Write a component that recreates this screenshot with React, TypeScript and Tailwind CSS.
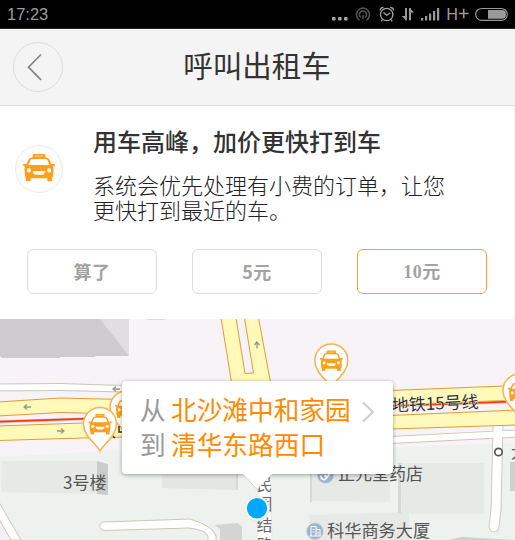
import React from 'react';

const CJK = "font-['Noto_Sans_CJK_SC',sans-serif]";

function TaxiShape() {
  return (
    <g>
      <path
        fill="#ff9f1c"
        d="M10.600 0H21.400Q22.200 0 22.300.8L22.600 3.800H24Q25.600 3.800 26.300 5.300L28.600 10.300L30.800 9.700Q32 9.700 32 11Q31.900 12.300 30 12.500Q30.500 13.800 30.500 15.500L30 22.500Q29.900 23.500 29.200 23.800V26.300Q29.200 27.300 28.200 27.300H25.300Q24.300 27.300 24.300 26.300V24.200H7.700V26.300Q7.700 27.300 6.700 27.300H3.800Q2.800 27.300 2.800 26.300V23.800Q2.100 23.500 2 22.500L1.500 15.500Q1.500 13.800 2 12.500Q.1 12.300 0 11Q0 9.700 1.200 9.700L3.400 10.300L5.700 5.300Q6.400 3.800 8 3.800H9.400L9.700.8Q9.800 0 10.600 0Z"
      />
      <path fill="#fff" d="M9.600 5.100H22.400Q24 5.100 24.600 6.500L26.500 11.100H5.500L7.400 6.500Q8 5.100 9.600 5.100Z" />
      <circle cx="5.900" cy="16.400" r="2.100" fill="#fff" />
      <circle cx="26.100" cy="16.400" r="2.100" fill="#fff" />
      <path fill="#fff" d="M10.200 17H21.800Q22.400 17 22.200 17.800Q21.600 20.800 18.800 20.800H13.200Q10.400 20.800 9.800 17.800Q9.600 17 10.200 17Z" />
      <path d="M12.200 2.100H20" stroke="#ffe3b5" strokeWidth="1.200" strokeDasharray="1.500 .5" />
    </g>
  );
}

function TaxiPin({ x, y }: { x: number; y: number }) {
  return (
    <g transform={`translate(${x} ${y})`}>
      <path d="M0 43.500C-3 37-16.500 29-16.500 16.500A16.500 16.500 0 0 1 16.500 16.500C16.500 29 3 37 0 43.500Z" fill="#fff" stroke="#fbb14b" strokeWidth="1.500" />
      <g transform="translate(-11.500 6.500) scale(.72 .75)">
        <TaxiShape />
      </g>
    </g>
  );
}

function StatusBar() {
  return (
    <div className="flex h-[29px] shrink-0 items-center justify-between border-b border-[#262226] bg-black pl-[7px] pr-[6px]">
      <span className="font-['Liberation_Sans',sans-serif] text-[16.500px] leading-none text-[#9c9c9c]">17:23</span>
      <svg className="h-[28px] w-[180px]" viewBox="329 0 180 28" fill="none" stroke="#999">
        <g fill="#a5a5a5" stroke="none">
          <rect x="332" y="17" width="3.600" height="3.600" rx="1" />
          <rect x="338" y="17" width="3.600" height="3.600" rx="1" />
          <rect x="344" y="17" width="3.600" height="3.600" rx="1" />
        </g>
        <g stroke="#555" strokeWidth="1.500">
          <path d="M359.500 20.300a6.600 6.600 0 1 1 7 0" />
          <path d="M361 17.500a3.600 3.600 0 1 1 4 0" />
          <path d="M363 15v4" />
        </g>
        <g stroke="#a5a5a5" strokeWidth="1.300">
          <circle cx="386.700" cy="14.500" r="6.200" />
          <path d="M383.500 12.500l3.200 2.800l3.500-2.300M380 10.500q.3-3 3.500-3.200M390.200 7.300q3.200.2 3.500 3.200M382.500 19.500l-1.200 1.800M391 19.500l1.200 1.800" />
        </g>
        <path d="M406 8v12.300M410 20.300V8" strokeWidth="2" />
        <path d="M406.500 20.500l-5-4.500h5zM409.500 8l4.800 4.500h-4.800z" fill="#999" stroke="none" />
        <g fill="#999" stroke="none">
          <rect x="421" y="18" width="2.200" height="2.500" />
          <rect x="425" y="16" width="2.200" height="4.500" />
          <rect x="429" y="13.500" width="2.200" height="7" />
          <rect x="433" y="11" width="2.200" height="9.500" />
          <rect x="437" y="8" width="2.200" height="12.500" />
        </g>
        <text x="446.300" y="20" fontSize="16.500" fill="#999" stroke="none" className="font-['Roboto',sans-serif]">H</text>
        <path d="M459 13.500h9.500M463.700 8.800v9.400" strokeWidth="1.600" />
        <rect x="475.700" y="8.500" width="31.600" height="11.800" rx="5.900" strokeWidth="1.200" />
        <path d="M488 10h14q4 0 4 4.400t-4 4.400h-14z" fill="#999" stroke="none" />
      </svg>
    </div>
  );
}

function Header() {
  return (
    <header className="grid h-[77px] shrink-0 grid-cols-[50px_1fr_50px] items-center border-b border-[#dedede] bg-[#f4f4f4] px-[13px]">
      <button className="flex size-[50px] items-center justify-center rounded-full border border-[#dcdcdc]">
        <svg className="size-[48px]" viewBox="0 0 48 48" fill="none" stroke="#858585" strokeWidth="1.700">
          <path d="M27 11.500L14.500 24.200L27 36.800" />
        </svg>
      </button>
      <h1 className={`${CJK} pr-px pb-[4px] text-center text-[29.500px] leading-none text-[#333]`}>呼叫出租车</h1>
    </header>
  );
}

function TipButton({ label, active, serif }: { label: string; active?: boolean; serif?: boolean }) {
  return (
    <button
      className={`h-[45px] w-[130px] rounded-[6px] border text-[18px] leading-none font-bold tracking-[0.5px] text-[#a3a3a3] ${
        active ? 'border-[#f9a13a]' : 'border-[#dedede]'
      } ${serif ? "font-['Liberation_Serif','Noto_Sans_CJK_SC',serif]" : "pb-[2px] font-['Noto_Sans_CJK_SC',sans-serif]"}`}
    >
      {label}
    </button>
  );
}

function TipPanel() {
  return (
    <section className="flex h-[213px] shrink-0 flex-col border-r border-[#f1f1f1] bg-white">
      <div className="flex h-[143px] pl-[15px]">
        <div className="mt-[39px] flex size-[48px] shrink-0 items-center justify-center rounded-full border border-[#ebebeb]">
          <svg className="mb-[2px] h-[28px] w-[32px]" viewBox="0 0 32 28">
            <TaxiShape />
          </svg>
        </div>
        <div className={`${CJK} ml-[30px] whitespace-nowrap text-[#333]`}>
          <h2 className="mt-[23px] text-[24px] leading-[24px] font-medium">用车高峰，加价更快打到车</h2>
          <p className="mt-[19px] text-[22px] leading-[25px] font-light text-[#222]">
            系统会优先处理有小费的订单，让您
            <br />
            更快打到最近的车。
          </p>
        </div>
      </div>
      <div className="flex gap-[35px] pl-[27px]">
        <TipButton label="算了" />
        <TipButton label="5元" />
        <TipButton label="10元" active serif />
      </div>
    </section>
  );
}

function MapDrawing() {
  return (
    <svg className={`block h-[221px] w-[515px] ${CJK}`} viewBox="0 319 515 221">
      <rect y="319" width="515" height="221" fill="#f7f3f7" />
      <path d="M0 457L122 450L270 450L393 447L515 443V540H0Z" fill="#edf2ee" />
      <path d="M0 522L13 540H0Z" fill="#f3eff3" />
      <path d="M0 319H129V356H95V357H60V358H2L0 356Z" fill="#cdcbce" />
      <path d="M100 319H129V356Z" fill="#e0dee1" />
      <path d="M147 319h18v1h-18z" fill="#dddbdd" />

      <g fill="#e6e9e6">
        <path d="M2 461H97V494L1 492Z" />
        <path d="M170 474H238V490L170 488Z" />
        <path d="M312 474H390V502L312 501Z" />
        <path d="M400 463H484V514H402Z" />
        <path d="M309 515L409 512V540H309Z" />
      </g>
      <path d="M97 461L108 464V495L97 494Z" fill="#c9ccca" />
      <path d="M162 474H238V490L162 488Z" fill="#e3e6e3" />
      <path d="M236 474h2v16h-2zM310 474h2v28h-2zM398 463h3v50h-3z" fill="#d5d9d5" />
      <path d="M214 525L238 523L242 527V540H220V529Z" fill="#d2d5d2" />
      <path d="M449 540L461 537L515 540Z" fill="#cecfce" />
      <path d="M510 462h5v29h-5z" fill="#cfd1cf" />

      <g stroke="#cdc6b8" strokeWidth="1" fill="#fff">
        <path d="M-2 384L60 383.500L124 385.500V392L60 390.500L-2 391Z" />
        <path d="M-4 497L21 540H11L-4 514Z" />
        <path d="M190 519L104 522A4 4 0 0 0 104 530.500L189 528Q207 530 208 537V545H216V536Q213 526 190 519Z" />
      </g>
      <path d="M390 440L518 433.500" fill="none" stroke="#cdc6b8" strokeWidth="8" />
      <path d="M498 427L496 510L494 527" fill="none" stroke="#cdc6b8" strokeWidth="10.800" strokeLinecap="round" />
      <path d="M390 440L518 433.500" fill="none" stroke="#fff" strokeWidth="6.200" />
      <path d="M498 427L496 510L494 527" fill="none" stroke="#fff" strokeWidth="9" strokeLinecap="round" />
      <path d="M258 474H270L272 540H258Z" fill="#fff" stroke="#e0e1da" strokeWidth=".7" />

      <g fill="#fffab9" stroke="#e39a3c" strokeWidth="1">
        <path d="M221 318L232 385H271L258.500 318H244.500L253.500 373L245 373.500L236 318Z" />
        <path d="M-2 402L60 398L124 399.500V414L60 412.500L-2 416Z" />
        <path d="M-2 426L83 423L124 422V437L83 438L-2 440.500Z" />
        <path d="M390 390.500L517 385.500V400L390 405Z" />
        <path d="M390 415.500L517 410V425L390 429Z" />
      </g>
      <path d="M0 421.800L124 417.500M390 406L515 401.500" strokeWidth="3" stroke="#d3c6c8" />
      <path d="M0 421.600L124 417.300M390 406L515 401.500" stroke="#ff3b00" strokeWidth="1.700" />

      <g stroke="#9b9689" strokeWidth="1.300" fill="none">
        <path d="M24 407h7M27 404.500l-3 2.500l3 2.500" />
        <path d="M57 431h7M61 428.500l3 2.500l-3 2.500" />
        <path d="M113 389h7M116 386.500l-3 2.500l3 2.500" />
        <path d="M257 348.500v-6M254.500 345l2.200-3l2.800 3" />
      </g>

      <TaxiPin x={126.500} y={391} />
      <path d="M112.500 436l2.500 2M119 426v6h5" stroke="#333" strokeWidth="1.500" fill="none" />
      <TaxiPin x={100} y={407.500} />
      <TaxiPin x={331.300} y={344} />
      <TaxiPin x={519.500} y={374} />

      <g fill="#555">
        <text x="63" y="489" fontSize="17">3号楼</text>
        <text x="338" y="480" fontSize="17">正元堂药店</text>
        <text x="327" y="536.500" fontSize="17.200">科华商务大厦</text>
        <text x="511" y="458" fontSize="16">大</text>
      </g>
      <text x="392" y="411.500" fontSize="17" fill="#333" stroke="#fffbe0" strokeWidth=".8" paintOrder="stroke" transform="rotate(-2.500 392 411)">地铁15号线</text>
      <g fill="#666" fontSize="15.500" textAnchor="middle">
        <text x="264.500" y="490">民</text>
        <text x="264.500" y="510">团</text>
        <text x="264.500" y="531">结</text>
        <text x="264.500" y="551">路</text>
      </g>
      <circle cx="498.500" cy="452" r="3.700" fill="#fff" stroke="#555" strokeWidth="1.700" />
      <g fill="#9db4cb" stroke="#d4dde5">
        <circle cx="325.500" cy="475" r="8.500" />
        <circle cx="315" cy="531.200" r="8.500" />
      </g>
      <path d="M321 475.500q0 4.500 3.500 4q1.500-.5 5-5.500" stroke="#fff" strokeWidth="1.800" fill="none" />
      <circle cx="325.500" cy="476" r="1.300" fill="#fff" />
      <path d="M311 536v-9.500h5v9.500M316 529.500h4v6.500M309.500 536h11M312.500 529.500h2M312.500 532h2M318 531.500v3" stroke="#fff" strokeWidth="1" fill="none" />
      <circle cx="257" cy="508.500" r="12.300" fill="#fff" stroke="#dfe4e2" strokeWidth=".7" />
      <circle cx="257" cy="508.300" r="10.200" fill="#00a8ff" />
    </svg>
  );
}

function RouteCallout() {
  return (
    <div className={`absolute top-[62px] left-[122px] h-[93px] w-[271px] rounded-[4px] bg-white shadow-[0_1px_4px_rgba(0,0,0,0.35)] ${CJK}`}>
      <div className="flex h-full items-center pb-[3px] pl-[18px]">
        <div className="grid grid-cols-[31px_180px] text-[25.700px] leading-[35px] whitespace-nowrap">
          <span className="text-[#999]">从</span>
          <span className="text-[#ff8a00]">北沙滩中和家园</span>
          <span className="text-[#999]">到</span>
          <span className="text-[#ff8a00]">清华东路西口</span>
        </div>
        <svg className="mb-[29px] ml-[11px] h-[22px] w-[13px]" viewBox="0 0 13 22" fill="none" stroke="#ccc" strokeWidth="2">
          <path d="M1 1.500L11 11L1 20.500" />
        </svg>
      </div>
      <svg className="absolute top-[93px] left-[120px] h-[17px] w-[32px]" viewBox="0 0 32 17">
        <path d="M1 0L15 15.500L30 0" fill="#fff" stroke="#c9cac9" strokeWidth=".8" />
        <path d="M1 -1H30" stroke="#fff" strokeWidth="3" />
      </svg>
    </div>
  );
}

export default function App() {
  return (
    <main className="flex h-[540px] w-[515px] flex-col overflow-hidden bg-white">
      <StatusBar />
      <Header />
      <TipPanel />
      <section className="relative h-[221px] shrink-0 overflow-hidden">
        <MapDrawing />
        <RouteCallout />
      </section>
    </main>
  );
}
